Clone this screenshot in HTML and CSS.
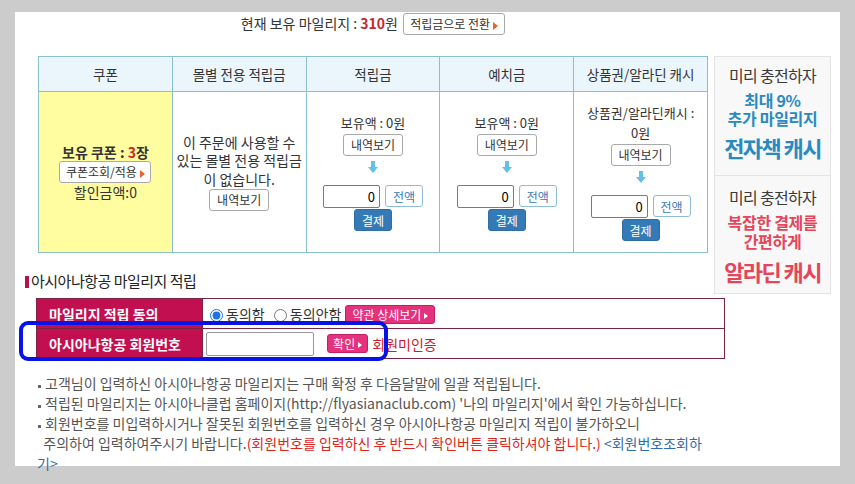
FILE: index.html
```html
<!DOCTYPE HTML>
<html>
	<head>
		<meta charset="utf-8"/>
		<title>주문 - 적립금 사용</title>
		<link rel="stylesheet" href="styles.css">
	</head>
	<body>
		<div class="page">
			<div class="top-line">
				현재 보유 마일리지 : <b class="red">310</b>원
				<button class="btn-white btn-convert">적립금으로 전환<span class="tri"></span></button>
			</div>

			<div class="point-wrap">
				<table class="point">
					<tr>
						<th>쿠폰</th>
						<th>몰별 전용 적립금</th>
						<th>적립금</th>
						<th>예치금</th>
						<th>상품권/알라딘 캐시</th>
					</tr>
					<tr>
						<td class="coupon">
							<div class="line18"><b>보유 쿠폰 : <span class="red">3</span>장</b></div>
							<button class="btn-white btn-coupon">쿠폰조회/적용<span class="tri"></span></button>
							<div class="line18">할인금액:0</div>
						</td>
						<td>
							<div class="mall-text">이 주문에 사용할 수<br>있는 몰별 전용 적립금<br>이 없습니다.</div>
							<button class="btn-white btn-view">내역보기</button>
						</td>
						<td>
							<div class="amt">보유액 : 0원</div>
							<button class="btn-white btn-view">내역보기</button>
							<div class="arrow"><svg width="10" height="12" viewBox="0 0 10 12"><rect x="3" y="0" width="4" height="6" fill="#62c1e5"/><polygon points="0,6 10,6 5,12" fill="#62c1e5"/></svg></div>
							<div class="use-row"><input class="num" type="text" value="0"><button class="btn-all">전액</button></div>
							<button class="btn-pay">결제</button>
						</td>
						<td>
							<div class="amt">보유액 : 0원</div>
							<button class="btn-white btn-view">내역보기</button>
							<div class="arrow"><svg width="10" height="12" viewBox="0 0 10 12"><rect x="3" y="0" width="4" height="6" fill="#62c1e5"/><polygon points="0,6 10,6 5,12" fill="#62c1e5"/></svg></div>
							<div class="use-row"><input class="num" type="text" value="0"><button class="btn-all">전액</button></div>
							<button class="btn-pay">결제</button>
						</td>
						<td>
							<div class="amt">상품권/알라딘캐시 :<br>0원</div>
							<button class="btn-white btn-view">내역보기</button>
							<div class="arrow"><svg width="10" height="12" viewBox="0 0 10 12"><rect x="3" y="0" width="4" height="6" fill="#62c1e5"/><polygon points="0,6 10,6 5,12" fill="#62c1e5"/></svg></div>
							<div class="use-row"><input class="num" type="text" value="0"><button class="btn-all">전액</button></div>
							<button class="btn-pay">결제</button>
						</td>
					</tr>
				</table>

				<div class="banner">
					<div class="bn bn-ebook">
						<div class="bn-head">미리 충전하자</div>
						<div class="bn-sub">최대 9%<br>추가 마일리지</div>
						<div class="bn-big">전자책 캐시</div>
					</div>
					<div class="bn bn-cash">
						<div class="bn-head">미리 충전하자</div>
						<div class="bn-sub">복잡한 결제를<br>간편하게</div>
						<div class="bn-big">알라딘 캐시</div>
					</div>
				</div>
			</div>

			<h3 class="sec-title">아시아나항공 마일리지 적립</h3>

			<table class="mileage">
				<tr>
					<th>마일리지 적립 동의</th>
					<td>
						<label><input type="radio" name="agree" checked>동의함</label>
						<label><input type="radio" name="agree">동의안함</label>
						<button class="btn-pink btn-terms">약관 상세보기<span class="tri-w"></span></button>
					</td>
				</tr>
				<tr>
					<th>아시아나항공 회원번호</th>
					<td>
						<input class="member-no" type="text">
						<button class="btn-pink btn-ok">확인<span class="tri-w"></span></button>
						<span class="not-auth">회원미인증</span>
					</td>
				</tr>
			</table>

			<ul class="notice">
				<li>고객님이 입력하신 아시아나항공 마일리지는 구매 확정 후 다음달말에 일괄 적립됩니다.</li>
				<li>적립된 마일리지는 아시아나클럽 홈페이지(http://flyasianaclub.com) '나의 마일리지'에서 확인 가능하십니다.</li>
				<li>회원번호를 미입력하시거나 잘못된 회원번호를 입력하신 경우 아시아나항공 마일리지 적립이 불가하오니<br>&nbsp;&nbsp;주의하여 입력하여주시기 바랍니다.<span class="warn">(회원번호를 입력하신 후 반드시 확인버튼 클릭하셔야 합니다.)</span> <a href="#">&lt;회원번호조회하기&gt;</a></li>
			</ul>

			<div class="mark"></div>
		</div>
	</body>
</html>
```

FILE: styles.css
```css
body {
	margin: 0;
	background: #cccccc;
	font-family: "Noto Sans CJK KR", "Noto Sans", sans-serif;
	font-size: 14px;
	color: #333;
}
button, input {
	font-family: inherit;
}
.page {
	position: relative;
	margin: 15px;
	height: 454px;
	background: #fff;
}
.red {
	color: #c8282d;
}
.top-line {
	width: 670px;
	height: 44px;
	margin: -3px 0 0 23px;
	text-align: center;
	line-height: 22px;
}
.tri {
	display: inline-block;
	margin-left: 3px;
	border-left: 5px solid #e8632a;
	border-top: 4px solid transparent;
	border-bottom: 4px solid transparent;
	vertical-align: -1px;
}
.tri-w {
	display: inline-block;
	margin-left: 3px;
	border-left: 4px solid #fff;
	border-top: 3px solid transparent;
	border-bottom: 3px solid transparent;
	vertical-align: 1px;
}
.btn-white {
	background: #fff;
	border: 1px solid #a9a9a9;
	border-radius: 3px;
	font-size: 12px;
	color: #333;
	padding: 0;
	height: 22px;
	line-height: 20px;
}
.btn-convert {
	width: 102px;
	margin-left: 2px;
}

/* point table */
.point-wrap {
	display: flex;
	gap: 6px;
	height: 195px;
	margin-left: 23px;
	align-items: flex-start;
}
.point {
	width: 670px;
	border-collapse: collapse;
	table-layout: fixed;
	flex-shrink: 0;
}
.point th, .point td {
	border: 1px solid #8cbfcc;
	text-align: center;
}
.point th {
	height: 32px;
	background: #eaf5fc;
	font-weight: normal;
	font-size: 13.5px;
}
.point td {
	height: 160px;
	padding: 0 2px;
	vertical-align: middle;
}
.point td.coupon {
	background: #fffd9f;
}
.line18 {
	line-height: 18px;
}
.btn-coupon {
	width: 92px;
	display: block;
	margin: 0 auto;
}
.mall-text {
	line-height: 18.5px;
}
.btn-view {
	width: 60px;
	display: block;
	margin: 1px auto 0;
}
.amt {
	font-size: 13px;
	line-height: 20px;
}
.arrow {
	height: 12px;
	margin: 5px 0 12px;
	line-height: 0;
}
.use-row {
	display: flex;
	justify-content: center;
	gap: 5px;
}
.num {
	width: 57px;
	height: 23px;
	box-sizing: border-box;
	border: 1px solid #7a7a7a;
	border-radius: 2px;
	text-align: right;
	font-size: 13px;
	padding: 0 4px;
}
.btn-all {
	width: 38px;
	height: 22px;
	padding: 0;
	background: #fff;
	border: 1px solid #8dbbd9;
	border-radius: 3px;
	color: #3479b5;
	font-size: 12px;
}
.btn-pay {
	display: block;
	margin: 1px auto 0;
	width: 38px;
	height: 22px;
	padding: 0;
	background: #337ab7;
	border: 1px solid #2e6da4;
	border-radius: 3px;
	color: #fff;
	font-size: 12px;
}

/* banners */
.banner {
	width: 117px;
	flex-shrink: 0;
}
.bn {
	background: #f8f8f8;
	border: 1px solid #e4e4e4;
	text-align: center;
}
.bn-ebook {
	height: 120px;
	box-sizing: border-box;
	padding-top: 7px;
	color: #2a8ac0;
}
.bn-cash {
	height: 118px;
	box-sizing: border-box;
	border-top: 0;
	padding-top: 10px;
	color: #e5455a;
}
.bn-head {
	font-size: 16px;
	line-height: 22px;
	letter-spacing: -0.7px;
	color: #3a3a3a;
}
.bn-sub {
	font-size: 16px;
	font-weight: bold;
	line-height: 18px;
	margin-top: 5px;
	letter-spacing: -0.3px;
}
.bn-cash .bn-sub {
	line-height: 19px;
}
.bn-big {
	font-size: 22px;
	font-weight: bold;
	line-height: 30px;
	margin-top: 5px;
	letter-spacing: -1.6px;
}

/* mileage */
.sec-title {
	margin: 21px 0 0 10px;
	font-size: 15px;
	font-weight: normal;
	letter-spacing: -0.5px;
	line-height: 18px;
	color: #222;
}
.sec-title::before {
	content: "";
	display: inline-block;
	width: 4px;
	height: 12px;
	margin-right: 2px;
	background: #b5124c;
	vertical-align: -1px;
}
.mileage {
	width: 689px;
	margin: 8px 0 0 21px;
	border-collapse: collapse;
}
.mileage th, .mileage td {
	height: 29px;
	border: 1px solid #7a2445;
	padding: 0;
}
.mileage th {
	width: 153px;
	padding-left: 12px;
	background: #c20f4f;
	color: #fff;
	font-size: 14px;
	text-align: left;
}
.mileage td {
	padding-left: 2px;
	color: #333;
}
.mileage label {
	margin-right: 1px;
}
.mileage input[type=radio] {
	margin: 0 3px 0 5px;
	vertical-align: -2px;
	accent-color: #1a73e8;
}
.btn-pink {
	background: #e4327c;
	border: 1px solid #c21e63;
	border-radius: 3px;
	color: #fff;
	font-size: 12px;
	padding: 0;
	height: 19px;
	line-height: 17px;
}
.btn-terms {
	width: 90px;
}
.member-no {
	width: 108px;
	height: 24px;
	box-sizing: border-box;
	border: 1px solid #999;
	border-radius: 2px;
	vertical-align: middle;
	margin: 0 10px 0 1px;
}
.btn-ok {
	width: 41px;
	vertical-align: middle;
}
.not-auth {
	color: #d01a2c;
	margin-left: 1px;
	vertical-align: middle;
}

/* notice list */
.notice {
	list-style: none;
	width: 671px;
	margin: 14px 0 0 22px;
	padding: 0;
	color: #555;
	line-height: 20px;
}
.notice li::before {
	content: "";
	display: inline-block;
	width: 3px;
	height: 3px;
	margin: 0 4px 0 1px;
	background: #666;
	vertical-align: 1px;
}
.warn {
	color: #e0251c;
}
.notice a {
	color: #2c6ea8;
	text-decoration: none;
}

/* highlight marker around member number row */
.mark {
	position: absolute;
	left: 4px;
	top: 309px;
	width: 369px;
	height: 40px;
	box-sizing: border-box;
	border: 4px solid #0614e8;
	border-radius: 9px;
}
```
